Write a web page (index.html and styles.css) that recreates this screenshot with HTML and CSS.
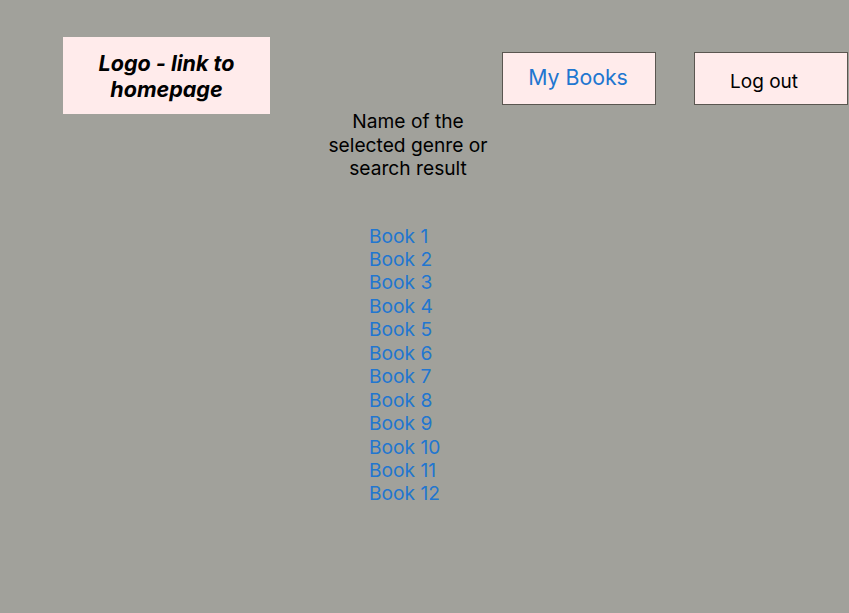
FILE: index.html
```html
<!DOCTYPE html>
<html>
<head>
<meta charset="utf-8">
<link rel="stylesheet" href="styles.css">
</head>
<body>
<header class="top">
  <a class="logo" href="#">Logo - link to<br>homepage</a>
  <a class="btn btn-books" href="#">My Books</a>
  <a class="btn btn-logout" href="#">Log out</a>
</header>
<main class="content">
  <h1 class="title">Name of the<br>selected genre or<br>search result</h1>
  <ul class="books">
    <li><a href="#">Book 1</a></li>
    <li><a href="#">Book 2</a></li>
    <li><a href="#">Book 3</a></li>
    <li><a href="#">Book 4</a></li>
    <li><a href="#">Book 5</a></li>
    <li><a href="#">Book 6</a></li>
    <li><a href="#">Book 7</a></li>
    <li><a href="#">Book 8</a></li>
    <li><a href="#">Book 9</a></li>
    <li><a href="#">Book 10</a></li>
    <li><a href="#">Book 11</a></li>
    <li><a href="#">Book 12</a></li>
  </ul>
</main>
</body>
</html>
```
FILE: styles.css
```css
html, body {
  margin: 0;
  padding: 0;
}
body {
  background: #a1a19b;
  font-family: Inter, "Noto Sans", sans-serif;
  color: #000;
  width: 849px;
  height: 613px;
  overflow: hidden;
}
a { text-decoration: none; }
.top {
  display: flex;
  align-items: flex-start;
  padding: 37px 0 0 63px;
}
.logo {
  width: 207px;
  height: 77px;
  background: #ffebeb;
  color: #000;
  font-style: italic;
  font-weight: 700;
  font-size: 21.5px;
  line-height: 26px;
  text-align: center;
  display: flex;
  align-items: center;
  justify-content: center;
  box-sizing: border-box;
  padding-left: 0;
}
.btn {
  box-sizing: border-box;
  height: 53px;
  margin-top: 15px;
  background: #ffebeb;
  border: 1px solid #5a5650;
  display: flex;
  align-items: center;
}
.btn-books {
  margin-left: 232px;
  width: 154px;
  justify-content: center;
  color: #2176d0;
  font-size: 21.3px;
  padding-bottom: 3px;
  padding-right: 2px;
}
.btn-logout {
  margin-left: 38px;
  width: 154px;
  color: #000;
  font-size: 19px;
  padding-left: 35px;
  padding-top: 6px;
}
.content {
  margin-top: -4px;
  padding-left: 308px;
}
.title {
  width: 200px;
  margin: 0;
  font-weight: 400;
  font-size: 19.2px;
  line-height: 23.5px;
  text-align: center;
}
.books {
  list-style: none;
  margin: 44px 0 0 61px;
  padding: 0;
  font-size: 19.2px;
  line-height: 23.45px;
}
.books a { color: #2176d0; }
```
